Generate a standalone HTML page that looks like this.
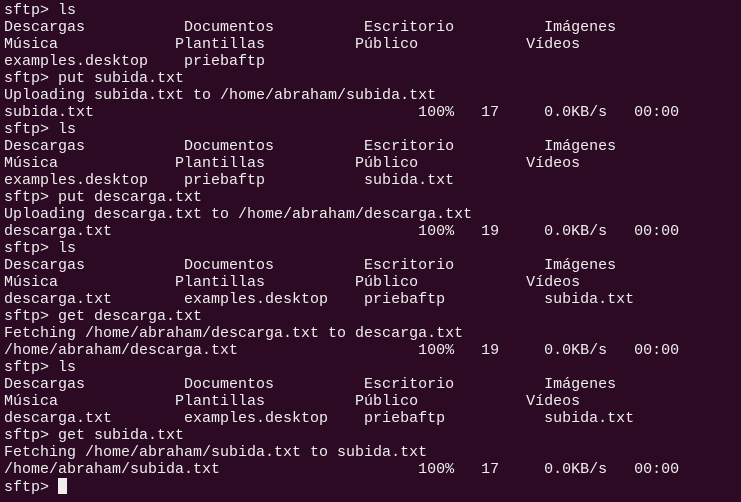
<!DOCTYPE html>
<html><head><meta charset="utf-8"><style>
html,body{margin:0;padding:0;background:#2c0a23;width:741px;height:502px;overflow:hidden}
pre{margin:0;padding:2px 0 0 4px;font-family:"Liberation Mono","DejaVu Sans Mono",monospace;font-size:15px;line-height:17px;color:#eeeeec;letter-spacing:0}
.c{display:inline-block;width:9px;height:16px;background:#eeeeec;vertical-align:-3px}
</style></head><body><pre>sftp&gt; ls
Descargas           Documentos          Escritorio          Imágenes
Música             Plantillas          Público            Vídeos
examples.desktop    priebaftp
sftp&gt; put subida.txt
Uploading subida.txt to /home/abraham/subida.txt
subida.txt                                    100%   17     0.0KB/s   00:00
sftp&gt; ls
Descargas           Documentos          Escritorio          Imágenes
Música             Plantillas          Público            Vídeos
examples.desktop    priebaftp           subida.txt
sftp&gt; put descarga.txt
Uploading descarga.txt to /home/abraham/descarga.txt
descarga.txt                                  100%   19     0.0KB/s   00:00
sftp&gt; ls
Descargas           Documentos          Escritorio          Imágenes
Música             Plantillas          Público            Vídeos
descarga.txt        examples.desktop    priebaftp           subida.txt
sftp&gt; get descarga.txt
Fetching /home/abraham/descarga.txt to descarga.txt
/home/abraham/descarga.txt                    100%   19     0.0KB/s   00:00
sftp&gt; ls
Descargas           Documentos          Escritorio          Imágenes
Música             Plantillas          Público            Vídeos
descarga.txt        examples.desktop    priebaftp           subida.txt
sftp&gt; get subida.txt
Fetching /home/abraham/subida.txt to subida.txt
/home/abraham/subida.txt                      100%   17     0.0KB/s   00:00
sftp&gt; <span class="c"></span></pre></body></html>
